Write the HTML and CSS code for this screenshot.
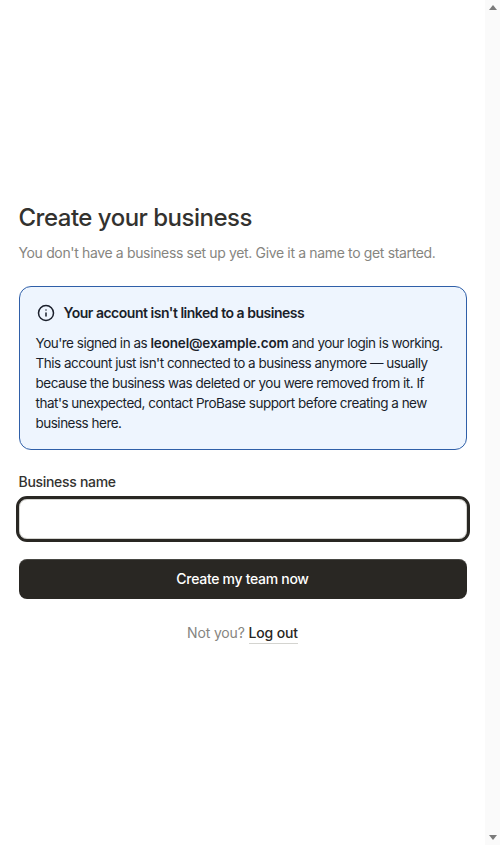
FILE: index.html
```html
<!DOCTYPE html>
<html lang="en">

<head>
    <meta charset="UTF-8">
    <meta name="viewport" content="width=device-width, initial-scale=1.0">
    <title>Create your business</title>
    <link rel="stylesheet" href="styles.css">
</head>

<body>
    <main class="page">
        <div class="container">
            <h1 class="title">Create your business</h1>
            <p class="subtitle">You don't have a business set up yet. Give it a name to get started.</p>

            <div class="notice">
                <div class="notice-head">
                    <svg class="notice-icon" viewBox="0 0 24 24" width="18" height="18" fill="none" stroke="currentColor" stroke-width="2" stroke-linecap="round" stroke-linejoin="round">
                        <circle cx="12" cy="12" r="10"></circle>
                        <path d="M12 16v-4"></path>
                        <path d="M12 8h.01"></path>
                    </svg>
                    <span class="notice-title">Your account isn't linked to a business</span>
                </div>
                <p class="notice-text">You're signed in as <strong>leonel@example.com</strong> and your login is working. This account just isn't connected to a business anymore — usually because the business was deleted or you were removed from it. If that's unexpected, contact ProBase support before creating a new business here.</p>
            </div>

            <form class="form">
                <label class="label" for="business-name">Business name</label>
                <input class="input" id="business-name" type="text">
                <button class="button" type="button">Create my team now</button>
            </form>

            <p class="logout">Not you? <a class="logout-link" href="#">Log out</a></p>
        </div>
    </main>
    <div class="scrollbar">
        <span class="arrow-up"></span>
        <span class="arrow-down"></span>
    </div>
</body>

</html>
```

FILE: styles.css
```css
body {
    font-family: Inter, "Noto Sans", sans-serif;
    background-color: #fff;
    color: #292723;
    margin: 0;
    padding: 0;
    display: flex;
    height: 845px;
    overflow: hidden;
}

.page {
    flex: 1;
    display: flex;
    justify-content: center;
    align-items: center;
}

.container {
    width: 448px;
}

.scrollbar {
    width: 15px;
    flex: none;
    background: #fafafa;
    display: flex;
    flex-direction: column;
    justify-content: space-between;
    align-items: center;
    padding: 5px 0;
    box-sizing: border-box;
}

.arrow-up,
.arrow-down {
    width: 0;
    height: 0;
    border-left: 4px solid transparent;
    border-right: 4px solid transparent;
}

.arrow-up {
    border-bottom: 5px solid #7a7a7a;
}

.arrow-down {
    border-top: 5px solid #7a7a7a;
}

.title {
    font-size: 24px;
    line-height: 32px;
    font-weight: 450;
    letter-spacing: -0.5px;
    color: #33322f;
    margin: 0 0 9px;
}

.subtitle {
    font-size: 14px;
    line-height: 20px;
    letter-spacing: -0.35px;
    color: #86857f;
    margin: 0 0 23px;
}

.notice {
    background: #eef5fe;
    border: 1px solid #2f5fa8;
    border-radius: 12px;
    padding: 16px;
    color: #1a1f2b;
}

.notice-head {
    display: flex;
    align-items: center;
    gap: 9px;
    margin-bottom: 10px;
}

.notice-icon {
    flex: none;
    margin-left: 1px;
}

.notice-title {
    font-size: 14px;
    line-height: 20px;
    font-weight: 600;
    letter-spacing: -0.48px;
}

.notice-text {
    font-size: 13.5px;
    line-height: 20px;
    letter-spacing: -0.5px;
    margin: 0;
}

.notice-text strong {
    font-weight: 600;
    letter-spacing: -0.15px;
}

.form {
    display: flex;
    flex-direction: column;
    margin-top: 22px;
}

.label {
    font-size: 14px;
    line-height: 20px;
    font-weight: 450;
    letter-spacing: -0.3px;
    color: #33322f;
    margin-bottom: 7px;
}

.input {
    height: 40px;
    box-sizing: border-box;
    border: 1px solid #d4d4d0;
    border-radius: 8px;
    background: #fff;
    outline: 3px solid #292723;
    outline-offset: 0;
    font: inherit;
    padding: 0 12px;
}

.button {
    height: 40px;
    margin-top: 20px;
    padding: 0 0 2px;
    border: 0;
    border-radius: 8px;
    background: #292723;
    box-shadow: inset 0 1px 0 rgba(255, 255, 255, 0.15);
    color: #fff;
    font-family: inherit;
    font-size: 14px;
    font-weight: 500;
    letter-spacing: -0.3px;
}

.logout {
    font-size: 14px;
    line-height: 20px;
    color: #86857f;
    text-align: center;
    letter-spacing: -0.15px;
    margin: 24px 0 0;
}

.logout-link {
    color: #292723;
    font-weight: 500;
    text-decoration: none;
    border-bottom: 1px solid #d4d4d0;
    padding-bottom: 2px;
}
```
